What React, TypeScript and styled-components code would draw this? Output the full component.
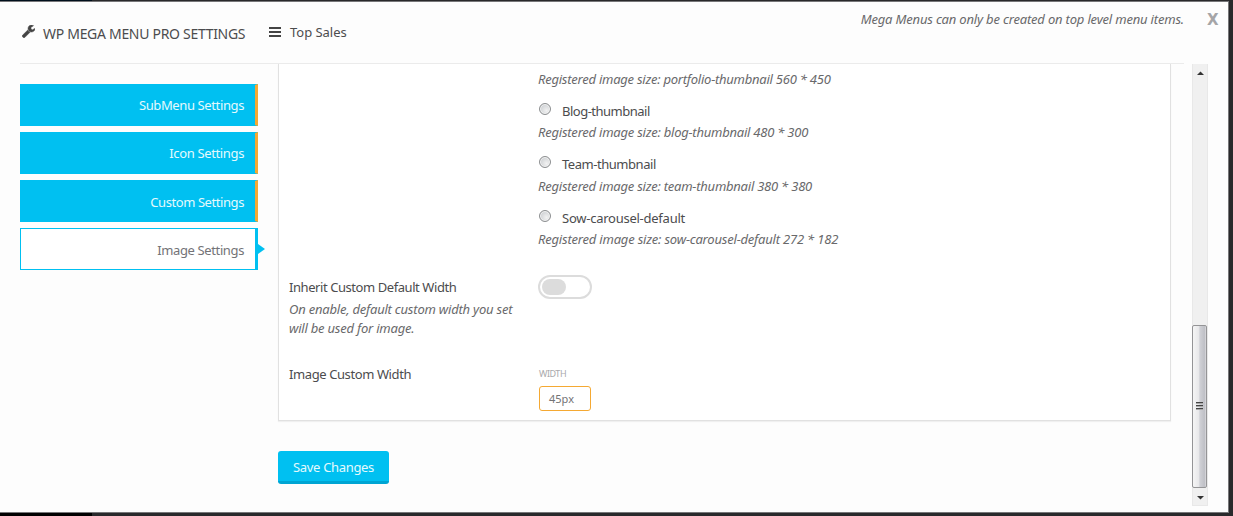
import React from 'react';
import styled, { createGlobalStyle } from 'styled-components';

const CYAN = '#00c0f1';
const AMBER = '#f5a933';

const Global = createGlobalStyle`
  * { box-sizing: border-box; }
  html, body { margin: 0; height: 516px; overflow: hidden; }
  body { background: #29292b; font: 13px/19px "Noto Sans", "Open Sans", sans-serif; color: #4c4c4e; }
`;

const Screen = styled.div`
  width: 1233px;
  height: 516px;
  padding-top: 1px;
  background: linear-gradient(#000f1c, #000) 0 0 / 92px 516px no-repeat, #29292b;
`;
const Modal = styled.div`
  width: 1229px;
  height: 512px;
  background: #fdfdfd;
  border: solid #777779;
  border-width: 1px 1px 1px 0;
  padding: 0 20px 6px 20px;
  display: flex;
  flex-direction: column;
`;
const Header = styled.header`
  height: 62px;
  flex: none;
  display: flex;
  position: relative;
  width: 1164px;
  border-bottom: 1px solid #ebebeb;
`;
const Brand = styled.div`
  width: 249px;
  display: flex;
  padding: 23px 0 0 2px;
  svg { margin-right: 8px; flex: none; }
`;
const BrandTitle = styled.h1`
  margin: -1px 0 0;
  font-size: 14px;
  font-weight: 400;
  line-height: 20px;
  white-space: nowrap;
  letter-spacing: -0.3px;
`;
const Crumb = styled.div`
  display: flex;
  padding-top: 21px;
  svg { margin: 4px 8px 0 0; }
`;
const Words = styled.span<{ $ls?: number }>`
  letter-spacing: ${p => p.$ls ?? 0}px;
  white-space: nowrap;
`;
const Notice = styled.em`
  margin-left: auto;
  padding-top: 8px;
  color: #69696b;
`;
const Close = styled.button`
  position: absolute;
  left: 1187px;
  top: 8px;
  padding: 0;
  border: 0;
  background: none;
  color: #a5a5a7;
  font: bold 15px/20px "DejaVu Sans", sans-serif;
`;
const Body = styled.div`
  display: flex;
  height: 442px;
`;
const Sidebar = styled.nav`
  width: 258px;
  padding: 20px 20px 0 0;
  display: flex;
  flex-direction: column;
  gap: 6px;
`;
const Tab = styled.a<{ $active?: boolean; $top: number }>`
  position: relative;
  height: 42px;
  display: flex;
  justify-content: flex-end;
  align-items: flex-start;
  padding: ${p => p.$top}px 11px 0 0;
  color: ${p => (p.$active ? '#737377' : '#e4fafd')};
  background: ${p => (p.$active ? '#fff' : CYAN)};
  border: 1px solid ${CYAN};
  border-right: 3px solid ${p => (p.$active ? CYAN : AMBER)};
`;
const Pointer = styled.i`
  position: absolute;
  right: -10px;
  top: 15px;
  border: solid transparent;
  border-width: 5px 0 5px 7px;
  border-left-color: ${CYAN};
`;
const Main = styled.main`
  width: 914px;
`;
const Panel = styled.section`
  width: 893px;
  height: 357px;
  padding: 6px 10px 0;
  background: #fff;
  border: 1px solid #e1e1e1;
  border-top: 0;
  box-shadow: 0 1px 1px rgba(0, 0, 0, 0.05);
`;
const Field = styled.div<{ $h: number }>`
  display: grid;
  grid-template-columns: 249px 1fr;
  height: ${p => p.$h}px;
`;
const Hint = styled.em`
  display: block;
  color: #69696b;
  line-height: 19px;
`;
const Choice = styled.div<{ $h: number }>`
  height: ${p => p.$h}px;
`;
const ChoiceLabel = styled.label<{ $h: number }>`
  display: flex;
  height: ${p => p.$h}px;
  line-height: 20px;
`;
const Radio = styled.span`
  width: 12px;
  height: 12px;
  margin: 2px 11px 0 1px;
  border-radius: 50%;
  border: 1px solid #8c8e90;
  box-shadow: inset 0 0 0 1px #f4f4f4;
  background: radial-gradient(circle at 65% 65%, #f2f2f2, #cdd0d3 75%);
`;
const Title = styled.div`
  height: 22px;
`;
const Toggle = styled.div`
  width: 54px;
  height: 24px;
  margin-top: -3px;
  padding: 2px;
  border: 2px solid #dcdcdc;
  border-radius: 12px;
  &::before {
    content: '';
    display: block;
    width: 24px;
    height: 16px;
    border-radius: 8px;
    background: #dcdcdc;
  }
`;
const WidthLabel = styled.div`
  height: 22px;
  padding: 0 0 0 1px;
  font-size: 9px;
  line-height: 18px;
  color: #a9a9ab;
`;
const WidthInput = styled.div`
  width: 52px;
  height: 25px;
  margin: -1px 0 0 1px;
  padding-left: 9px;
  border: 1px solid ${AMBER};
  border-radius: 3px;
  font-size: 11px;
  line-height: 24px;
  color: #737375;
`;
const Save = styled.button`
  display: block;
  width: 111px;
  height: 33px;
  margin-top: 30px;
  padding: 2px 0 0;
  border: 0;
  border-bottom: 3px solid #00a5d3;
  border-radius: 3px;
  background: ${CYAN};
  color: #e4fafd;
  font: 13px/28px "Noto Sans", sans-serif;
`;
const Scrollbar = styled.div`
  width: 16px;
  height: 442px;
  display: flex;
  flex-direction: column;
  align-items: center;
  background: #f0f0f0;
  border: solid #e8e8e8;
  border-width: 0 1px 1px;
`;
const Track = styled.div`
  height: 261px;
  padding-top: 1px;
`;
const Thumb = styled.div`
  width: 15px;
  height: 163px;
  margin-left: -1px;
  display: flex;
  align-items: center;
  justify-content: center;
  border: 1px solid #949496;
  border-radius: 2px;
  background: linear-gradient(90deg, #f5f5f5, #e8e8ea 45%, #d0d1d6 52%, #bfc0c6 88%, #dcdcdf);
`;

const choices = [
  { name: 'Blog-thumbnail', slug: 'blog-thumbnail 480 * 300', height: 53, label: 22, nameSpacing: -0.5, hintSpacing: -0.23 },
  { name: 'Team-thumbnail', slug: 'team-thumbnail 380 * 380', height: 54, label: 23, nameSpacing: -0.46, hintSpacing: -0.23 },
  { name: 'Sow-carousel-default', slug: 'sow-carousel-default 272 * 182', height: 54, label: 22, nameSpacing: -0.25, hintSpacing: -0.2 },
];

export default function App() {
  return (
    <Screen>
      <Global />
      <Modal>
        <Header>
          <Brand>
            <svg width="13" height="13" viewBox="0 0 1664 1664" fill="#444" stroke="#444" strokeWidth="60">
              <path d="M1028 924l-682 682q-37 37-90 37-52 0-91-37L59 1498q-38-36-38-90 0-53 38-91l681-681q39 98 114.500 173.500T1028 924zm634-435q0 39-23 106-47 134-164.500 217.500T1216 896q-185 0-316.500-131.500T768 448t131.500-316.500T1216 0q58 0 121.500 16.500T1445 63q16 11 16 28t-16 28l-293 169v224l193 107q5-3 79-48.500t135.500-81T1630 454q15 0 23.500 10t8.500 25z" />
            </svg>
            <BrandTitle>WP MEGA MENU PRO SETTINGS</BrandTitle>
          </Brand>
          <Crumb>
            <svg width="13" height="11" viewBox="0 0 13 11" fill="#444">
              <path d="M0 0h12v2H0zM0 4h12v2H0zM0 8h12v2H0z" />
            </svg>
            <Words $ls={-0.02}>Top Sales</Words>
          </Crumb>
          <Notice><Words $ls={-0.18}>Mega Menus can only be created on top level menu items.</Words></Notice>
          <Close>X</Close>
        </Header>
        <Body>
          <Sidebar>
            <Tab $top={11}><Words $ls={-0.38}>SubMenu Settings</Words></Tab>
            <Tab $top={11}><Words $ls={-0.36}>Icon Settings</Words></Tab>
            <Tab $top={12}><Words $ls={-0.42}>Custom Settings</Words></Tab>
            <Tab $top={12} $active><Words $ls={-0.38}>Image Settings</Words><Pointer /></Tab>
          </Sidebar>
          <Main>
            <Panel>
              <Field $h={208}>
                <div />
                <div>
                  <Choice $h={31}><Hint><Words $ls={-0.24}>Registered image size: portfolio-thumbnail 560 * 450</Words></Hint></Choice>
                  {choices.map(c => (
                    <Choice key={c.name} $h={c.height}>
                      <ChoiceLabel $h={c.label}><Radio /><Words $ls={c.nameSpacing}>{c.name}</Words></ChoiceLabel>
                      <Hint><Words $ls={c.hintSpacing}>Registered image size: {c.slug}</Words></Hint>
                    </Choice>
                  ))}
                </div>
              </Field>
              <Field $h={87}>
                <div>
                  <Title><Words $ls={-0.43}>Inherit Custom Default Width</Words></Title>
                  <Hint><Words $ls={-0.21}>On enable, default custom width you set<br />will be used for image.</Words></Hint>
                </div>
                <Toggle />
              </Field>
              <Field $h={50}>
                <Title><Words $ls={-0.4}>Image Custom Width</Words></Title>
                <div>
                  <WidthLabel><Words $ls={-0.45}>WIDTH</Words></WidthLabel>
                  <WidthInput><Words>45px</Words></WidthInput>
                </div>
              </Field>
            </Panel>
            <Save><Words $ls={-0.33}>Save Changes</Words></Save>
          </Main>
          <Scrollbar>
            <Track>
              <svg width="9" height="12" viewBox="0 0 9 12"><path d="M1 8h7L4.500 4.500z" fill="#333" /></svg>
            </Track>
            <Thumb>
              <svg width="8" height="9" viewBox="0 0 8 9">
                <path d="M0 0h7v1H0zM0 3h7v1H0zM0 6h7v1H0z" fill="#444" />
                <path d="M0 1h7v1H0zM0 4h7v1H0zM0 7h7v1H0z" fill="#aaa" />
              </svg>
            </Thumb>
            <svg width="9" height="17" viewBox="0 0 9 17"><path d="M1 8h7L4.500 11.500z" fill="#333" /></svg>
          </Scrollbar>
        </Body>
      </Modal>
    </Screen>
  );
}
